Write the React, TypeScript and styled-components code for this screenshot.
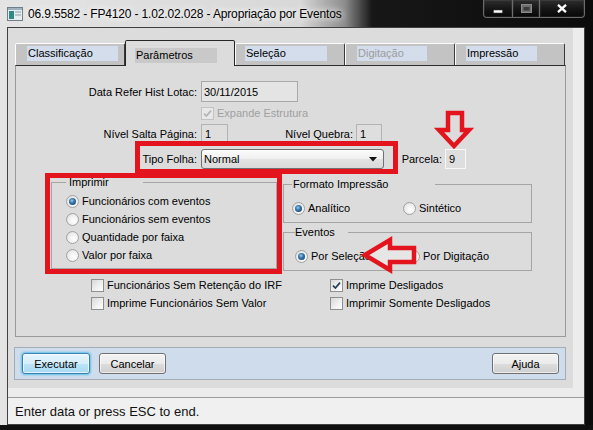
import React from 'react';
import styled, { createGlobalStyle } from 'styled-components';

const UI_FONT = `"Liberation Sans", Arial, Helvetica, sans-serif`;
const RED = '#e3141d';

const GlobalStyle = createGlobalStyle`
  *, *::before, *::after { box-sizing: border-box; }
  html, body { margin: 0; padding: 0; }
  body {
    width: 593px;
    height: 430px;
    overflow: hidden;
    background: #000;
    font-family: ${UI_FONT};
  }
`;

const Window = styled.div`
  position: relative;
  width: 593px;
  height: 430px;
  display: flex;
  flex-direction: column;
  overflow: hidden;
  background:
    linear-gradient(to bottom, transparent 425px, #101010 425px),
    linear-gradient(to right, #e4e4e4 0px, #d8d8d8 300px, #8c8c8c 345px, #171717 372px, #0b0b0b 100%);
`;

/* ---------- title bar ---------- */
const TitleBar = styled.div`
  height: 27px;
  flex: none;
  display: flex;
  align-items: center;
  padding-left: 7px;
`;

const TitleText = styled.span`
  margin-left: 5px;
  font-family: ${UI_FONT};
  font-size: 12px;
  letter-spacing: -0.15px;
  color: #000;
  white-space: nowrap;
  text-shadow: 0 0 6px #fff, 0 0 10px #fff;
`;

const CaptionButtons = styled.div`
  margin-left: auto;
  margin-right: 8px;
  align-self: flex-start;
  display: flex;
  height: 18px;
`;

const CaptionButton = styled.div<{ $w: number; $kind: 'min' | 'max' | 'close' }>`
  width: ${(p) => p.$w}px;
  height: 18px;
  display: flex;
  align-items: center;
  justify-content: center;
  background: linear-gradient(#2e2e2e, #161616 50%, #070707);
  border: 1px solid #6c6c6c;
  border-top: none;
  border-left-width: ${(p) => (p.$kind === 'min' ? 1 : 0)}px;
  border-radius: ${(p) =>
    p.$kind === 'min' ? '0 0 0 4px' : p.$kind === 'close' ? '0 0 4px 0' : '0'};
  box-shadow: inset 0 0 0 1px rgba(255, 255, 255, 0.07);
`;

/* ---------- client ---------- */
const Client = styled.div`
  flex: 1;
  margin: 0 8px 5px 7px;
  border: 1px solid #404040;
  background: #ececec;
  display: flex;
  flex-direction: column;
`;

const Form = styled.div`
  width: 565px;
  height: 360px;
  flex: none;
  background: #dcdcdc;
  padding: 12px 0 0 7px;
  display: flex;
  flex-direction: column;
  font-family: ${UI_FONT};
  font-size: 11px;
  color: #000;
`;

const StatusBar = styled.div`
  margin-top: auto;
  height: 27px;
  border-top: 1px solid #9c9c9c;
  background: #f0f0f0;
  padding-left: 7px;
  display: flex;
  align-items: center;
  font-family: ${UI_FONT};
  font-size: 13px;
  color: #111;
`;

/* ---------- tabs ---------- */
const TabStrip = styled.div`
  display: flex;
  align-items: flex-end;
  height: 25px;
  position: relative;
  z-index: 1;
`;

const Tab = styled.div<{ $active?: boolean }>`
  width: 110px;
  height: ${(p) => (p.$active ? 26 : 22)}px;
  margin-bottom: ${(p) => (p.$active ? -1 : 0)}px;
  background: ${(p) => (p.$active ? '#dcdcdc' : '#c3c3c3')};
  border: 1px solid;
  border-bottom: none;
  border-color: ${(p) =>
    p.$active ? '#262626 #262626 transparent #262626' : '#fcfcfc #3a3a3a transparent #fcfcfc'};
  border-radius: 2px 2px 0 0;
  padding-top: ${(p) => (p.$active ? 7 : 2)}px;
`;

const TabLabel = styled.span<{ $w: number; $ml: number; $active?: boolean; $disabled?: boolean }>`
  display: block;
  width: ${(p) => p.$w}px;
  margin-left: ${(p) => p.$ml}px;
  height: 15px;
  line-height: 15px;
  padding-left: 1px;
  white-space: nowrap;
  background: ${(p) => (p.$active ? '#c9c9c9' : '#d3ddeb')};
  color: ${(p) => (p.$disabled ? '#9c9c9c' : '#000')};
`;

const Panel = styled.div`
  width: 551px;
  height: 272px;
  flex: none;
  border: 1px solid #9a9a9a;
  border-top-color: #2c2c2c;
  background: #dcdcdc;
  display: flex;
  flex-direction: column;
`;

/* ---------- form rows ---------- */
const Row = styled.div<{ $mt: number; $h: number; $ml?: number }>`
  display: flex;
  align-items: center;
  margin-top: ${(p) => p.$mt}px;
  margin-left: ${(p) => p.$ml ?? 0}px;
  height: ${(p) => p.$h}px;
  flex: none;
`;

const FieldLabel = styled.span<{ $w?: number; $ml?: number; $mr?: number }>`
  ${(p) => (p.$w ? `width: ${p.$w}px;` : '')}
  margin-left: ${(p) => p.$ml ?? 0}px;
  margin-right: ${(p) => p.$mr ?? 4}px;
  text-align: right;
  white-space: nowrap;
`;

const TextBox = styled.div<{ $w: number; $variant?: 'disabled' | 'plain' | 'light' }>`
  width: ${(p) => p.$w}px;
  height: 100%;
  display: flex;
  align-items: center;
  padding-left: ${(p) => (p.$variant === 'disabled' ? 2 : 3)}px;
  border: 1px solid
    ${(p) => (p.$variant === 'light' ? '#f7f7f7' : p.$variant === 'disabled' ? '#a9a9a9' : '#b3b3b3')};
  background: ${(p) => (p.$variant === 'disabled' ? '#e4e4e4' : '#dedede')};
  white-space: nowrap;
`;

const Select = styled.div`
  width: 183px;
  height: 100%;
  display: flex;
  align-items: center;
  padding: 0 6px 0 2px;
  border: 1px solid #707070;
  border-radius: 3px;
  background: linear-gradient(#fbfbfb, #efefef 50%, #e3e3e3 51%, #d9d9d9);
  justify-content: space-between;
`;

const OptionLabel = styled.label<{ $w?: number; $muted?: boolean }>`
  display: flex;
  align-items: center;
  gap: 3px;
  ${(p) => (p.$w ? `width: ${p.$w}px;` : '')}
  height: 18px;
  flex: none;
  white-space: nowrap;
  color: ${(p) => (p.$muted ? '#a0a0a0' : '#000')};
`;

const Radio = styled.span<{ $checked?: boolean }>`
  width: 13px;
  height: 13px;
  flex: none;
  border-radius: 50%;
  border: 1px solid #a2a2a2;
  background: radial-gradient(circle at 62% 62%, #ffffff 0%, #eeeeee 55%, #d2d2d2 100%);
  display: flex;
  align-items: center;
  justify-content: center;
  &::after {
    content: '';
    display: ${(p) => (p.$checked ? 'block' : 'none')};
    width: 7px;
    height: 7px;
    border-radius: 50%;
    background: radial-gradient(circle at 42% 38%, #9ccbef 0%, #3676aa 40%, #112f55 100%);
  }
`;

const CheckBox = styled.span<{ $disabled?: boolean }>`
  width: 13px;
  height: 13px;
  flex: none;
  border: 1px solid ${(p) => (p.$disabled ? '#c2c2c2' : '#8e8f8f')};
  background: ${(p) =>
    p.$disabled
      ? '#e8e8e8'
      : 'linear-gradient(135deg, #d8d8d8 0%, #f0f0f0 55%, #ffffff 100%)'};
  display: flex;
  align-items: center;
  justify-content: center;
`;

const GroupsRow = styled.div`
  display: flex;
  align-items: flex-start;
  margin-top: 7px;
  margin-left: 35px;
  flex: none;
`;

const RightColumn = styled.div`
  display: flex;
  flex-direction: column;
  margin-left: 6px;
`;

const GroupBox = styled.fieldset<{ $w: number; $h: number; $pl: number; $pt: number; $mt?: number }>`
  margin: ${(p) => p.$mt ?? 0}px 0 0 0;
  width: ${(p) => p.$w}px;
  height: ${(p) => p.$h}px;
  min-width: 0;
  padding: ${(p) => p.$pt}px 0 0 ${(p) => p.$pl}px;
  border: 1px solid #a5a5a5;
  display: flex;
  flex-direction: column;
`;

const Legend = styled.legend<{ $w: number; $pl: number }>`
  width: ${(p) => p.$w}px;
  height: 13px;
  line-height: 13px;
  padding: 0 0 0 ${(p) => p.$pl}px;
  margin: 0;
  white-space: nowrap;
`;

const OptionLine = styled.div`
  display: flex;
  align-items: center;
`;

const CheckGrid = styled.div`
  display: grid;
  grid-template-columns: 239px auto;
  grid-auto-rows: 18px;
  margin-top: 5px;
  margin-left: 75px;
`;

/* ---------- button bar ---------- */
const ButtonBar = styled.div`
  width: 552px;
  height: 33px;
  margin: 10px 0 0 -1px;
  flex: none;
  border: 1px solid #a4acb8;
  background: #cfdcec;
  padding: 0 6px 0 7px;
  display: flex;
  align-items: center;
  gap: 9px;
`;

const Button = styled.button<{ $focused?: boolean; $push?: boolean }>`
  width: ${(p) => (p.$focused ? 68 : 67)}px;
  height: 21px;
  padding: 0;
  margin-left: ${(p) => (p.$push ? 'auto' : '0')};
  font-family: ${UI_FONT};
  font-size: 11px;
  color: #000;
  border-radius: 3px;
  border: 1px solid ${(p) => (p.$focused ? '#3c7fb1' : '#707070')};
  background: ${(p) =>
    p.$focused
      ? 'linear-gradient(#e5f4fc, #d4eefb 50%, #bde4f8 51%, #a8daf4)'
      : 'linear-gradient(#f3f3f3, #ebebeb 50%, #dddddd 51%, #cfcfcf)'};
  box-shadow: ${(p) =>
    p.$focused
      ? '0 0 2px 1px #5fc3ec, inset 0 0 0 1px rgba(255,255,255,0.7)'
      : 'inset 0 0 0 1px rgba(255,255,255,0.6)'};
`;

/* ---------- annotations (drawn over the screenshot) ---------- */
const RedFrame = styled.div<{ $x: number; $y: number; $w: number; $h: number }>`
  position: absolute;
  left: ${(p) => p.$x}px;
  top: ${(p) => p.$y}px;
  width: ${(p) => p.$w}px;
  height: ${(p) => p.$h}px;
  border: 5px solid ${RED};
  pointer-events: none;
`;

const ArrowMark = styled.svg<{ $x: number; $y: number }>`
  position: absolute;
  left: ${(p) => p.$x}px;
  top: ${(p) => p.$y}px;
  overflow: visible;
  pointer-events: none;
`;

/* ---------- small drawings ---------- */
const TitleIcon = () => (
  <svg width="16" height="14" viewBox="0 0 16 14">
    <rect x="0.5" y="0.5" width="15" height="13" fill="#e6ecef" stroke="#6f7f88" />
    <rect x="1" y="1" width="14" height="2" fill="#9fb3bf" />
    <rect x="2" y="4" width="5" height="8" fill="#2f8a86" />
    <rect x="8" y="4" width="6" height="2" fill="#b8c4ca" />
    <rect x="8" y="7" width="6" height="2" fill="#b8c4ca" />
  </svg>
);

const CheckMark = ({ color }: { color: string }) => (
  <svg width="9" height="9" viewBox="0 0 9 9">
    <path d="M1 4.6 L3.4 7 L8 1.6" fill="none" stroke={color} strokeWidth="1.7" />
  </svg>
);

const Radio0 = ({ label, checked, w }: { label: string; checked?: boolean; w?: number }) => (
  <OptionLabel $w={w}>
    <Radio $checked={checked} />
    {label}
  </OptionLabel>
);

const Check0 = ({ label, checked }: { label: string; checked?: boolean }) => (
  <OptionLabel>
    <CheckBox>{checked && <CheckMark color="#2b3d55" />}</CheckBox>
    {label}
  </OptionLabel>
);

const tabs = [
  { label: 'Classificação', w: 91, ml: 11 },
  { label: 'Parâmetros', w: 82, ml: 9, active: true },
  { label: 'Seleção', w: 82, ml: 9 },
  { label: 'Digitação', w: 70, ml: 11, disabled: true },
  { label: 'Impressão', w: 71, ml: 10 },
];

export default function App() {
  return (
    <>
      <GlobalStyle />
      <Window>
        <TitleBar>
          <TitleIcon />
          <TitleText>06.9.5582 - FP4120 - 1.02.02.028 - Apropriação por Eventos</TitleText>
          <CaptionButtons>
            <CaptionButton $w={30} $kind="min">
              <svg width="10" height="10" viewBox="0 0 10 10">
                <rect x="0.5" y="6" width="9" height="3" fill="#fff" stroke="#333" strokeWidth="0.6" />
              </svg>
            </CaptionButton>
            <CaptionButton $w={27} $kind="max">
              <svg width="11" height="9" viewBox="0 0 11 9">
                <rect x="0.5" y="0.5" width="10" height="8" fill="#6f6f6f" stroke="#8a8a8a" />
                <rect x="2.5" y="3" width="6" height="3.5" fill="#3a3a3a" />
              </svg>
            </CaptionButton>
            <CaptionButton $w={45} $kind="close">
              <svg width="10" height="9" viewBox="0 0 10 9">
                <path d="M1 0.8 L9 8.2 M9 0.8 L1 8.2" stroke="#fff" strokeWidth="2.3" />
              </svg>
            </CaptionButton>
          </CaptionButtons>
        </TitleBar>

        <Client>
          <Form>
            <TabStrip>
              {tabs.map((t) => (
                <Tab key={t.label} $active={t.active}>
                  <TabLabel $w={t.w} $ml={t.ml} $active={t.active} $disabled={t.disabled}>
                    {t.label}
                  </TabLabel>
                </Tab>
              ))}
            </TabStrip>

            <Panel>
              <Row $mt={15} $h={21}>
                <FieldLabel $w={181}>Data Refer Hist Lotac:</FieldLabel>
                <TextBox $w={97} $variant="disabled">30/11/2015</TextBox>
              </Row>

              <Row $mt={4} $h={14} $ml={185}>
                <OptionLabel $muted>
                  <CheckBox $disabled>
                    <CheckMark color="#b4b4b4" />
                  </CheckBox>
                  Expande Estrutura
                </OptionLabel>
              </Row>

              <Row $mt={4} $h={20}>
                <FieldLabel $w={181}>Nível Salta Página:</FieldLabel>
                <TextBox $w={27}>1</TextBox>
                <FieldLabel $w={125} $mr={3}>
                  Nível Quebra:
                </FieldLabel>
                <TextBox $w={26}>1</TextBox>
              </Row>

              <Row $mt={5} $h={20}>
                <FieldLabel $w={181}>Tipo Folha:</FieldLabel>
                <Select>
                  <span>Normal</span>
                  <svg width="8" height="5" viewBox="0 0 8 5">
                    <path d="M0 0 H8 L4 4.5 Z" fill="#111" />
                  </svg>
                </Select>
                <FieldLabel $w={42} $ml={16} $mr={3}>
                  Parcela:
                </FieldLabel>
                <TextBox $w={21} $variant="light">
                  9
                </TextBox>
              </Row>

              <GroupsRow>
                <GroupBox $w={226} $h={93} $pl={14} $pt={3}>
                  <Legend $w={77} $pl={3}>
                    Imprimir
                  </Legend>
                  <Radio0 label="Funcionários com eventos" checked />
                  <Radio0 label="Funcionários sem eventos" />
                  <Radio0 label="Quantidade por faixa" />
                  <Radio0 label="Valor por faixa" />
                </GroupBox>

                <RightColumn>
                  <GroupBox $w={249} $h={45} $pl={8} $pt={8} $mt={2}>
                    <Legend $w={143} $pl={1}>
                      Formato Impressão
                    </Legend>
                    <OptionLine>
                      <Radio0 label="Analítico" checked w={111} />
                      <Radio0 label="Sintético" />
                    </OptionLine>
                  </GroupBox>
                  <GroupBox $w={249} $h={45} $pl={11} $pt={8} $mt={3}>
                    <Legend $w={53} $pl={0}>
                      Eventos
                    </Legend>
                    <OptionLine>
                      <Radio0 label="Por Seleção" checked w={112} />
                      <Radio0 label="Por Digitação" />
                    </OptionLine>
                  </GroupBox>
                </RightColumn>
              </GroupsRow>

              <CheckGrid>
                <Check0 label="Funcionários Sem Retenção do IRF" />
                <Check0 label="Imprime Desligados" checked />
                <Check0 label="Imprime Funcionários Sem Valor" />
                <Check0 label="Imprimir Somente Desligados" />
              </CheckGrid>
            </Panel>

            <ButtonBar>
              <Button $focused>Executar</Button>
              <Button>Cancelar</Button>
              <Button $push>Ajuda</Button>
            </ButtonBar>
          </Form>

          <StatusBar>Enter data or press ESC to end.</StatusBar>
        </Client>

        <RedFrame $x={135} $y={141} $w={263} $h={33} />
        <RedFrame $x={45} $y={173} $w={237} $h={101} />

        <ArrowMark $x={436} $y={110} width="36" height="40" viewBox="0 0 36 40">
          <polygon
            points="12,3 26,3 26,20 33,20 18,36 3,20 12,20"
            fill="#dcdcdc"
            stroke={RED}
            strokeWidth="4.5"
          />
        </ArrowMark>
        <ArrowMark $x={362} $y={237} width="58" height="36" viewBox="0 0 58 36">
          <polygon
            points="3,18 28,3 28,11 52,11 52,25 28,25 28,33"
            fill="#e6e6e6"
            stroke={RED}
            strokeWidth="4.5"
          />
        </ArrowMark>
      </Window>
    </>
  );
}
